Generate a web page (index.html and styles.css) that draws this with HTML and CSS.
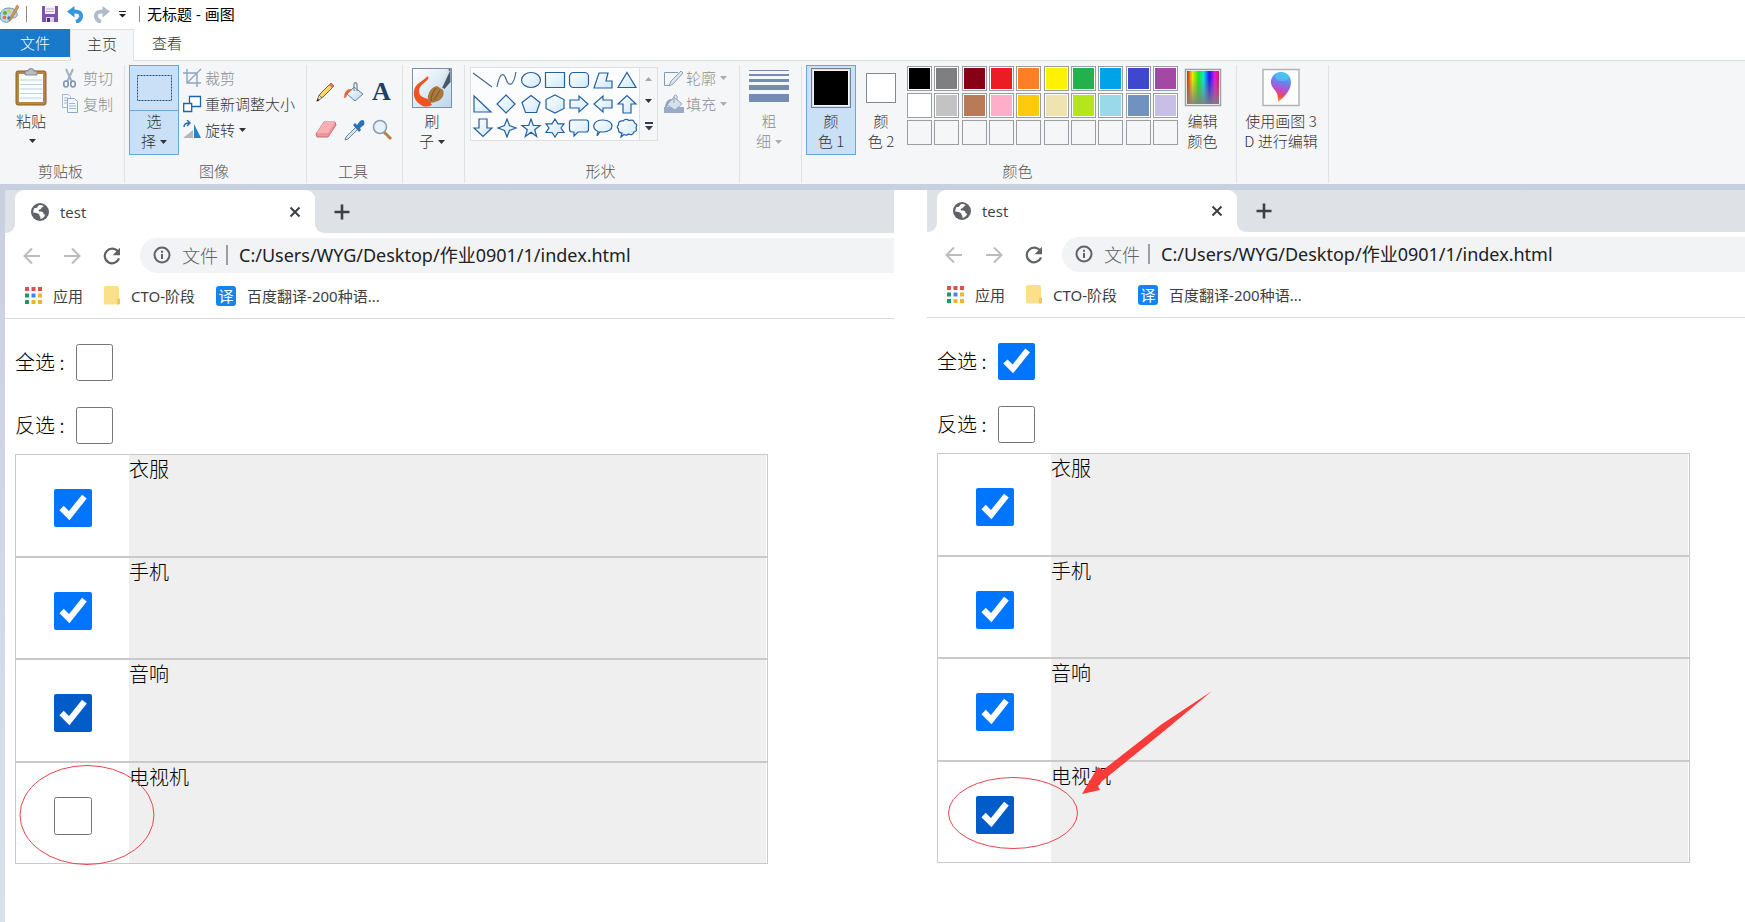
FILE: index.html
```html
<!DOCTYPE html>
<html lang="zh-CN">
<head>
<meta charset="utf-8">
<title>无标题 - 画图</title>
<link rel="stylesheet" href="styles.css">
</head>
<body>
<svg class="defs" aria-hidden="true">
  <defs>
    <linearGradient id="sky" x1="0" y1="0" x2="1" y2="1"><stop offset="0" stop-color="#fff"/><stop offset="1" stop-color="#cfe8f8"/></linearGradient>
    <linearGradient id="rainbow"><stop offset="0" stop-color="#e8140c"/><stop offset=".17" stop-color="#f2e60a"/><stop offset=".36" stop-color="#18e818"/><stop offset=".52" stop-color="#12e0e0"/><stop offset=".7" stop-color="#1818f0"/><stop offset=".87" stop-color="#e818e0"/><stop offset="1" stop-color="#e81450"/></linearGradient>
    <linearGradient id="grayfade" x1="0" y1="0" x2="0" y2="1"><stop offset=".2" stop-color="#808080" stop-opacity="0"/><stop offset="1" stop-color="#808080" stop-opacity=".9"/></linearGradient>
    <linearGradient id="drop" x1=".6" y1="0" x2=".4" y2="1"><stop offset="0" stop-color="#35c3f0"/><stop offset=".35" stop-color="#6f7df0"/><stop offset=".6" stop-color="#c04cc8"/><stop offset=".8" stop-color="#ee4a4a"/><stop offset="1" stop-color="#f7a52a"/></linearGradient>
    <linearGradient id="paint" x1="0" y1="0" x2="1" y2="1"><stop offset="0" stop-color="#fff"/><stop offset="1" stop-color="#bcd6ea"/></linearGradient>
  </defs>
  <symbol id="globe" viewBox="0 0 18 18"><circle cx="9" cy="9" r="9" fill="#5f6368"/><path fill="#fff" d="M8 2.200c1.800-.3 3.300 0 4.600.9-.2 1.200-1.900 1-2.200 2-.2.900-.6 1.400-1.600 1.400-.9 0-1.300.600-1.100 1.300.3.800 1.200.7 2.300.8 1.500.100 2.300.8 2.400 1.800 0 1 1.200.5 1.600 1.500-.4 2-2.300 3.600-4.700 4 .2-1 .4-1.700-.3-2.400-.9-.8-.3-1.800-1.200-2.400C6.500 10.300 4.500 9.700 2.100 9.500 2.200 8 2.700 6.300 3.600 5c1.200-.2 1.800.2 2.500-.4C6.900 3.900 6.800 2.600 8 2.200z"/></symbol>
  <symbol id="close" viewBox="0 0 12 12"><path d="M1.500 1.500l9 9M10.500 1.500l-9 9" stroke="#3c4043" stroke-width="2" fill="none"/></symbol>
  <symbol id="plus" viewBox="0 0 16 16"><path d="M8 .5v15M.5 8h15" stroke="#3c4043" stroke-width="2.600" fill="none"/></symbol>
  <symbol id="back" viewBox="0 0 18 18"><path d="M17 9H2M9 1.500L1.500 9 9 16.500" stroke="#babcbe" stroke-width="2" fill="none"/></symbol>
  <symbol id="forward" viewBox="0 0 18 18"><path d="M1 9h15M9 1.500L16.500 9 9 16.500" stroke="#babcbe" stroke-width="2" fill="none"/></symbol>
  <symbol id="reload" viewBox="0 0 18 18"><path d="M15.200 5A7.300 7.300 0 1 0 16 11.300" stroke="#5f6368" stroke-width="2.200" fill="none"/><path d="M17 .8v7.400H9.600z" fill="#5f6368"/></symbol>
  <symbol id="info" viewBox="0 0 18 18"><circle cx="9" cy="9" r="7.500" fill="none" stroke="#5f6368" stroke-width="2"/><path d="M9 8v5M9 4.700v2" stroke="#5f6368" stroke-width="2"/></symbol>
  <symbol id="apps" viewBox="0 0 17 17"><path fill="#de5246" d="M0 0h4v4H0zM6.500 0h4v4h-4zM13 0h4v4h-4z"/><path fill="#1a9e60" d="M0 6.500h4v4H0zM0 13h4v4H0z"/><path fill="#4285f4" d="M6.500 6.500h4v4h-4z"/><path fill="#f0b32b" d="M13 6.500h4v4h-4zM6.500 13h4v4h-4zM13 13h4v4h-4z"/></symbol>
  <symbol id="folder" viewBox="0 0 16 19"><path fill="#fbe089" d="M1.500 0H13q2 0 2 2v10l1 1v4q0 1.500-2 1.500H1.500Q0 18.500 0 17V1.500Q0 0 1.500 0z"/><path fill="#eec95a" d="M13 12.500l3 .5v4q0 1.500-3 1.500z"/></symbol>
  <symbol id="caret" viewBox="0 0 7 4"><path fill="currentColor" d="M0 0h7L3.500 4z"/></symbol>
</svg>

<header class="titlebar">
  <svg class="ico20" viewBox="0 0 20 20"><path d="M9 4C3 4 0 8 0 12c0 5 4 7 8 6 3-1 1-3 4-4 4 0 6-2 5-5-1-3-4-5-8-5z" fill="#b7d9ea" stroke="#6f97ae"/><circle cx="5" cy="9" r="2" fill="#5aae4a"/><circle cx="9" cy="7" r="1.800" fill="#e9c13b"/><circle cx="4.500" cy="13.500" r="1.800" fill="#e2703a"/><circle cx="9" cy="14" r="1.700" fill="#4277c5"/><path d="M17 1l2 2-8 13-2 1 .5-2.500z" fill="#d59a5b" stroke="#9b6b38" stroke-width=".6"/></svg>
  <span class="tsep"></span>
  <button class="qa" aria-label="保存"><svg width="16" height="16" viewBox="0 0 16 16"><path d="M0 0h16v16H0z" fill="#7d55a5"/><path d="M3 0h10v8H3z" fill="#f6f2fb"/><path d="M4 3h8M4 5.500h8" stroke="#b9a5d2"/><path d="M4 11h8v5H4z" fill="#d8cbe6"/><path d="M5 12h3v4H5z" fill="#54357a"/></svg></button>
  <button class="qa" aria-label="撤消"><svg width="17" height="17" viewBox="0 0 17 17"><path d="M3 5.500h5q6.500 0 6 5-.5 4-5 5.500" fill="none" stroke="#3a96dc" stroke-width="4"/><path d="M0 5.500L7.500 0v11.500z" fill="#3a96dc"/></svg></button>
  <button class="qa" aria-label="重做"><svg width="17" height="17" viewBox="0 0 17 17"><path d="M14 5.500H9q-6.500 0-6 5 .5 4 5 5.500" fill="none" stroke="#b0bccb" stroke-width="4"/><path d="M17 5.500L9.500 0v11.500z" fill="#b0bccb"/></svg></button>
  <button class="qa more" aria-label="自定义快速访问工具栏"><svg width="7" height="7" viewBox="0 0 7 7"><path d="M0 .5h7" stroke="#222"/><path d="M0 3h7L3.500 6.500z" fill="#222"/></svg></button>
  <span class="tsep"></span>
  <h1 class="apptitle">无标题 - 画图</h1>
</header>

<nav class="tabs">
  <button class="rtab file">文件</button>
  <button class="rtab active">主页</button>
  <button class="rtab">查看</button>
</nav>

<section class="ribbon">
  <div class="group g-clip">
    <div class="body">
      <button class="big paste">
        <svg width="32" height="38" viewBox="0 0 32 38"><rect x="1" y="3" width="30" height="34" rx="2" fill="#b8873f" stroke="#8a6124"/><path d="M4 6h24v28H4z" fill="#fcfdff"/><path d="M5 12h22M5 16.500h22M5 21h22M5 25.500h22M5 30h22" stroke="#b9cfe8"/><path d="M10 3h3q0-2.500 3-2.500T19 3h3v4H10z" fill="#b9bcc2" stroke="#74787f" stroke-width=".8"/></svg>
        <span>粘贴</span><svg class="caret low"><use href="#caret"/></svg>
      </button>
      <div class="stack">
        <button class="small off"><svg width="20" height="20" viewBox="0 0 20 20"><path d="M5 1l6 13M12 1L6 14" stroke="#9fb0c8" stroke-width="2" fill="none"/><ellipse cx="5" cy="16" rx="2.300" ry="3" fill="none" stroke="#7d94b5" stroke-width="1.600"/><ellipse cx="12" cy="16" rx="2.300" ry="3" fill="none" stroke="#7d94b5" stroke-width="1.600"/></svg>剪切</button>
        <button class="small off"><svg width="20" height="20" viewBox="0 0 20 20"><path d="M1.500.500h6l2 2v11h-8z" fill="#f3f7fc" stroke="#a4b8d2"/><path d="M3 4h4M3 6.500h4M3 9h4" stroke="#a4b8d2"/><path d="M6.500 4.500h7l3 3v11h-10z" fill="#f3f7fc" stroke="#8ea8c8"/><path d="M8 9.500h6M8 12h7M8 14.500h7" stroke="#a4b8d2"/></svg>复制</button>
      </div>
    </div>
    <h2>剪贴板</h2>
  </div>

  <div class="group g-image">
    <div class="body">
      <button class="select">
        <span class="selicon"><svg width="35" height="26" viewBox="0 0 35 26"><rect x=".5" y=".5" width="34" height="25" fill="none" stroke="#254f85" stroke-dasharray="2 1"/></svg></span>
        <span class="seltext">选<br>择<svg class="caret"><use href="#caret"/></svg></span>
      </button>
      <div class="stack">
        <button class="small off"><svg width="20" height="20" viewBox="0 0 20 20"><path d="M4 1v14h14M0 5h14v14M4 15L18 1" fill="none" stroke="#90a3bf" stroke-width="1.400"/></svg>裁剪</button>
        <button class="small"><svg width="20" height="20" viewBox="0 0 20 20"><path d="M6.500 2.500h11v10h-11z" fill="#fff" stroke="#1c64a8" stroke-width="1.300"/><path d="M.7 9.500h8v8h-8z" fill="#fff" stroke="#1c64a8" stroke-width="1.300"/></svg>重新调整大小</button>
        <button class="small"><svg width="20" height="20" viewBox="0 0 20 20"><path d="M11 4l7 14h-7z" fill="#2d80bd"/><path d="M0 18h10V10z" fill="#b3b7bb"/><path d="M1 7q0-4 5-4M4 0l3 3-3 3" fill="none" stroke="#2767ae" stroke-width="1.400"/></svg>旋转<svg class="caret"><use href="#caret"/></svg></button>
      </div>
    </div>
    <h2>图像</h2>
  </div>

  <div class="group g-tools">
    <div class="body toolgrid">
      <button aria-label="铅笔"><svg width="22" height="22" viewBox="0 0 22 22"><path d="M3 18l2-5L16 2l3 3L8 16z" fill="#f4d96a" stroke="#80602a"/><path d="M16 2l3 3-2 2-3-3z" fill="#d77a6b"/><path d="M2 20l2-6 3 3z" fill="#f2dfc0" stroke="#5e4a30" stroke-width=".7"/><path d="M1.500 20.500l1-3 2 2z" fill="#222"/></svg></button>
      <button aria-label="填充"><svg width="22" height="22" viewBox="0 0 22 22"><path d="M11 6l9 7-8 7-8-7z" fill="url(#paint)" stroke="#60819e"/><path d="M11 10V3q1-2.500 3 0v7" fill="none" stroke="#7d8b98" stroke-width="1.300"/><path d="M8 8Q1 8 1 17q3 0 3-4l5-4z" fill="#e8663a"/></svg></button>
      <button aria-label="文本"><b class="texta">A</b></button>
      <button aria-label="橡皮擦"><svg width="22" height="22" viewBox="0 0 22 22"><path d="M9 3h11l1 3-8 12H2l-1-3z" fill="#f0959a" stroke="#cd6a70"/><path d="M9 3h11l-7 11H1.500z" fill="#f7b0b3"/></svg></button>
      <button aria-label="颜色选取器"><svg width="22" height="22" viewBox="0 0 22 22"><path d="M13 8L3 18l-1 3 3-1L15 10z" fill="#d5e6f3" stroke="#66839e"/><path d="M10 6l2-2 2 2 3-4q3-2 4 0t0 4l-4 3 1 2-2 2z" fill="#2a72b6"/></svg></button>
      <button aria-label="放大镜"><svg width="22" height="22" viewBox="0 0 22 22"><path d="M13 13l7 7" stroke="#b18149" stroke-width="3"/><circle cx="9" cy="8" r="6.500" fill="#e4f2fc" stroke="#8b9bac" stroke-width="1.500"/></svg></button>
    </div>
    <h2>工具</h2>
  </div>

  <div class="group g-brush">
    <div class="body">
      <button class="big">
        <svg width="40" height="40" viewBox="0 0 40 40"><path d="M.5.500h39v39H.5z" fill="url(#paint)" stroke="#7990a6"/><path d="M15 8.500c1.500-.3 2 1 1 2.500-2 3-8 6-9 11-1 6 5 8 9 9l4 6c-4 2-8 2-11 0C4 34 1 29 2 23c1-8 10-10 13-14.500z" fill="#ee5420"/><path d="M38.500 1v13l-6 7-5-3L37 1z" fill="#46566f"/><path d="M36 2l2 1-8 17-4-2z" fill="#dbe3ea"/><path d="M25 18l6 4c2 5-1 9-5 11-3 1-6 2-9 2 1-3-2-3-1-7 1-5 4-9 9-10z" fill="#a9783f"/><path d="M24 20c-3 4-5 8-5 13M28 22c-2 4-4 7-6 10" stroke="#7c5425" fill="none"/><path d="M.5.500h39v39H.5z" fill="none" stroke="#7990a6"/></svg>
        <span>刷<br>子<svg class="caret"><use href="#caret"/></svg></span>
      </button>
    </div>
  </div>

  <div class="group g-shapes">
    <div class="body">
      <div class="gallery">
        <div class="shapes">
          <button aria-label="直线"><svg viewBox="0 0 22 20"><path d="M1 3l19 14"/></svg></button>
          <button aria-label="曲线"><svg viewBox="0 0 22 20"><path d="M1 17C4 1 8 3 10 9s7 10 10-7"/></svg></button>
          <button aria-label="椭圆"><svg viewBox="0 0 22 20"><ellipse cx="11" cy="10" rx="9.500" ry="7.500"/></svg></button>
          <button aria-label="矩形"><svg viewBox="0 0 22 20"><path d="M1.500 2.500h19v15h-19z"/></svg></button>
          <button aria-label="圆角矩形"><svg viewBox="0 0 22 20"><rect x="1.500" y="2.500" width="19" height="15" rx="4"/></svg></button>
          <button aria-label="多边形"><svg viewBox="0 0 22 20"><path d="M7 3h9l-2 8h6v7H2z"/></svg></button>
          <button aria-label="三角形"><svg viewBox="0 0 22 20"><path d="M11 2.500l9 15H2z"/></svg></button>
          <button aria-label="直角三角形"><svg viewBox="0 0 22 20"><path d="M2 2v16h17z"/></svg></button>
          <button aria-label="菱形"><svg viewBox="0 0 22 20"><path d="M10 1l9 9-9 9-9-9z"/></svg></button>
          <button aria-label="五边形"><svg viewBox="0 0 22 20"><path d="M11 1.500l9 7-3.500 10h-11L2 8.500z"/></svg></button>
          <button aria-label="六边形"><svg viewBox="0 0 22 20"><path d="M11 1l9 4.500v9L11 19l-9-4.500v-9z"/></svg></button>
          <button aria-label="右箭头"><svg viewBox="0 0 22 20"><path d="M2 6h9V2l9 8-9 8v-4H2z"/></svg></button>
          <button aria-label="左箭头"><svg viewBox="0 0 22 20"><path d="M20 6h-9V2l-9 8 9 8v-4h9z"/></svg></button>
          <button aria-label="上箭头"><svg viewBox="0 0 22 20"><path d="M7 19v-9H2l9-8.500 9 8.500h-5v9z"/></svg></button>
          <button aria-label="下箭头"><svg viewBox="0 0 22 20"><path d="M7 1v9H2l9 8.500 9-8.500h-5V1z"/></svg></button>
          <button aria-label="四角星"><svg viewBox="0 0 22 20"><path d="M11 1l2.500 6.500L20 10l-6.500 2.500L11 19l-2.500-6.500L2 10l6.500-2.500z"/></svg></button>
          <button aria-label="五角星"><svg viewBox="0 0 22 20"><path d="M11 1l2.300 6.500H20l-5.300 4.200 2 6.800-5.700-4.200-5.700 4.200 2-6.800L2 7.500h6.700z"/></svg></button>
          <button aria-label="六角星"><svg viewBox="0 0 22 20"><path d="M11 1l3 4.800h6L17 10l3 4.500h-6L11 19l-3-4.500H2L5 10 2 5.800h6z"/></svg></button>
          <button aria-label="圆角矩形标注"><svg viewBox="0 0 22 20"><path d="M4 2h14q2.500 0 2.500 2.500v7q0 2.500-2.500 2.500h-8l-4 4v-4H4q-2.500 0-2.500-2.500v-7Q1.500 2 4 2z"/></svg></button>
          <button aria-label="椭圆形标注"><svg viewBox="0 0 22 20"><path d="M5 18l1-4.500C-1 10 1 2 11 2c12 0 12 12 0 12q-2 0-3-.3z"/></svg></button>
          <button aria-label="云形标注"><svg viewBox="0 0 22 20"><path d="M5 19l1-4q-4 0-3.500-4-2.500-2 0-4Q2 2.500 7 3q3-3 6-.5 5-1.500 5.500 2.500 3.500 1.500 1.500 4.500 1.500 4-2 4.500-1.500 4-5.500 2-2 2-4.500.5z"/></svg></button>
        </div>
        <div class="scroll">
          <button aria-label="向上"><svg width="7" height="4" viewBox="0 0 7 4"><path d="M0 4h7L3.500 0z" fill="#a5a8ac"/></svg></button>
          <button aria-label="向下"><svg class="caret"><use href="#caret"/></svg></button>
          <button aria-label="更多"><svg width="8" height="9" viewBox="0 0 8 9"><path d="M0 1h8" stroke="#333c52" stroke-width="2"/><path d="M0 4h8L4 8.500z" fill="#333c52"/></svg></button>
        </div>
      </div>
      <div class="stack">
        <button class="small off"><svg width="20" height="20" viewBox="0 0 20 20"><path d="M14 4.500H.5v13H5L14 8" fill="none" stroke="#8599b0"/><path d="M5 18l2-5L17 3l2 2L9 16z" fill="#d9e4ee" stroke="#8ba2bb"/></svg>轮廓<svg class="caret"><use href="#caret"/></svg></button>
        <button class="small off"><svg width="20" height="20" viewBox="0 0 20 20"><path d="M0 13h20v6H0z" fill="#9baac7"/><path d="M10 3l8 7-7 6-8-5z" fill="#d5e0ec" stroke="#94a9c2"/><path d="M10 9V2q1-2 3 0v4" fill="none" stroke="#94a3b5"/><path d="M9 5Q2 4 1 13h2l2-5z" fill="#8da2c1"/></svg>填充<svg class="caret"><use href="#caret"/></svg></button>
      </div>
    </div>
    <h2>形状</h2>
  </div>

  <div class="group g-size">
    <div class="body">
      <button class="big off">
        <svg width="40" height="40" viewBox="0 0 40 40"><path fill="#768cb0" d="M0 2h40v1H0zM0 6h40v2H0zM0 11h40v3H0zM0 17h40v5H0zM0 26h40v8H0z"/></svg>
        <span>粗<br>细<svg class="caret"><use href="#caret"/></svg></span>
      </button>
    </div>
  </div>

  <div class="group g-colors">
    <div class="body">
      <button class="big col sel"><span class="well"><i class="sw black"></i></span><span>颜<br>色 1</span></button>
      <button class="big col"><span class="well plain"><i class="sw white"></i></span><span>颜<br>色 2</span></button>
      <div class="palette">
        <button class="c black" aria-label="黑色"></button><button class="c gray" aria-label="灰色"></button><button class="c darkred" aria-label="深红色"></button><button class="c red" aria-label="红色"></button><button class="c orange" aria-label="橙色"></button><button class="c yellow" aria-label="黄色"></button><button class="c green" aria-label="绿色"></button><button class="c turquoise" aria-label="青绿色"></button><button class="c indigo" aria-label="靛蓝色"></button><button class="c purple" aria-label="紫色"></button>
        <button class="c white" aria-label="白色"></button><button class="c lightgray" aria-label="浅灰色"></button><button class="c brown" aria-label="褐色"></button><button class="c rose" aria-label="玫瑰色"></button><button class="c gold" aria-label="金色"></button><button class="c tan" aria-label="浅黄色"></button><button class="c lime" aria-label="酸橙色"></button><button class="c pale" aria-label="淡青绿色"></button><button class="c bluegray" aria-label="蓝灰色"></button><button class="c lavender" aria-label="淡紫色"></button>
        <button class="c e" aria-label="自定义 1"></button><button class="c e" aria-label="自定义 2"></button><button class="c e" aria-label="自定义 3"></button><button class="c e" aria-label="自定义 4"></button><button class="c e" aria-label="自定义 5"></button><button class="c e" aria-label="自定义 6"></button><button class="c e" aria-label="自定义 7"></button><button class="c e" aria-label="自定义 8"></button><button class="c e" aria-label="自定义 9"></button><button class="c e" aria-label="自定义 10"></button>
      </div>
      <button class="big edit">
        <svg width="38" height="40" viewBox="0 0 38 40"><path d="M1.500 1.500h35v36h-35z" fill="#fff" stroke="#a0a0a0" stroke-width="1.500"/><path d="M3 3h32v33H3z" fill="url(#rainbow)"/><path d="M3 3h32v33H3z" fill="url(#grayfade)"/></svg>
        <span>编辑<br>颜色</span>
      </button>
    </div>
    <h2>颜色</h2>
  </div>

  <div class="group g-3d">
    <div class="body">
      <button class="big">
        <svg width="38" height="40" viewBox="0 0 38 40"><path d="M1 1.500h36v36H1z" fill="#fdfdfd" stroke="#b4b4b4" stroke-width="1.500"/><path d="M19 4c-6 0-10.500 5-10 11 .5 5 6 8 6.500 12 .3 3 .2 4 .5 7 5-4 13-11 13-19.500C29 8.500 25 4 19 4z" fill="url(#drop)"/><ellipse cx="20" cy="9" rx="7" ry="4" fill="#4cd0f0" opacity=".6"/></svg>
        <span>使用画图 3<br>D 进行编辑</span>
      </button>
    </div>
  </div>
</section>

<main class="workspace">
  <div class="canvas">
    <section class="browser first">
      <div class="strip">
        <div class="edge"></div>
        <div class="tab"><svg class="globe"><use href="#globe"/></svg><span class="tname">test</span><button class="x" aria-label="关闭标签页"><svg width="12" height="12"><use href="#close"/></svg></button></div>
        <div class="rest"><button aria-label="新标签页"><svg width="16" height="16"><use href="#plus"/></svg></button></div>
      </div>
      <div class="toolbar">
        <button aria-label="后退"><svg width="18" height="18"><use href="#back"/></svg></button>
        <button aria-label="前进"><svg width="18" height="18"><use href="#forward"/></svg></button>
        <button aria-label="重新加载"><svg width="18" height="18"><use href="#reload"/></svg></button>
        <div class="omni"><svg width="18" height="18"><use href="#info"/></svg><label for="url1">文件</label><input id="url1" type="text" value="C:/Users/WYG/Desktop/作业0901/1/index.html"></div>
      </div>
      <div class="bookmarks">
        <a href="#"><svg width="17" height="17"><use href="#apps"/></svg>应用</a>
        <a href="#"><svg width="16" height="19"><use href="#folder"/></svg>CTO-阶段</a>
        <a href="#"><span class="yi">译</span>百度翻译-200种语...</a>
      </div>
      <div class="page">
        <p class="opt"><label for="all1">全选 :</label><input id="all1" type="checkbox"></p>
        <p class="opt"><label for="inv1">反选 :</label><input id="inv1" type="checkbox"></p>
        <ul class="list">
          <li><span class="cell"><input id="a1" type="checkbox" checked></span><label for="a1">衣服</label></li>
          <li><span class="cell"><input id="a2" type="checkbox" checked></span><label for="a2">手机</label></li>
          <li><span class="cell"><input id="a3" class="hot" type="checkbox" checked></span><label for="a3">音响</label></li>
          <li><span class="cell"><input id="a4" type="checkbox"></span><label for="a4">电视机</label>
            <svg class="mark markleft" width="136" height="102" viewBox="0 0 136 102"><ellipse cx="68" cy="51" rx="67" ry="49.500" fill="none" stroke="#e6454e"/></svg></li>
        </ul>
      </div>
    </section>

    <section class="browser second">
      <div class="strip">
        <div class="edge"></div>
        <div class="tab"><svg class="globe"><use href="#globe"/></svg><span class="tname">test</span><button class="x" aria-label="关闭标签页"><svg width="12" height="12"><use href="#close"/></svg></button></div>
        <div class="rest"><button aria-label="新标签页"><svg width="16" height="16"><use href="#plus"/></svg></button></div>
      </div>
      <div class="toolbar">
        <button aria-label="后退"><svg width="18" height="18"><use href="#back"/></svg></button>
        <button aria-label="前进"><svg width="18" height="18"><use href="#forward"/></svg></button>
        <button aria-label="重新加载"><svg width="18" height="18"><use href="#reload"/></svg></button>
        <div class="omni"><svg width="18" height="18"><use href="#info"/></svg><label for="url2">文件</label><input id="url2" type="text" value="C:/Users/WYG/Desktop/作业0901/1/index.html"></div>
      </div>
      <div class="bookmarks">
        <a href="#"><svg width="17" height="17"><use href="#apps"/></svg>应用</a>
        <a href="#"><svg width="16" height="19"><use href="#folder"/></svg>CTO-阶段</a>
        <a href="#"><span class="yi">译</span>百度翻译-200种语...</a>
      </div>
      <div class="page">
        <p class="opt"><label for="all2">全选 :</label><input id="all2" type="checkbox" checked></p>
        <p class="opt"><label for="inv2">反选 :</label><input id="inv2" type="checkbox"></p>
        <ul class="list">
          <li><span class="cell"><input id="b1" type="checkbox" checked></span><label for="b1">衣服</label></li>
          <li><span class="cell"><input id="b2" type="checkbox" checked></span><label for="b2">手机</label></li>
          <li><span class="cell"><input id="b3" type="checkbox" checked></span><label for="b3">音响</label></li>
          <li><span class="cell"><input id="b4" class="hot" type="checkbox" checked></span><label for="b4">电视机</label>
            <svg class="mark markright" width="276" height="164" viewBox="0 0 276 164"><ellipse cx="76" cy="122" rx="64.500" ry="35.500" fill="none" stroke="#e6454e"/><path d="M275 0L225 33l-59 46-5-3-16 27 18-4-2-4 3-4L232 36z" fill="#fb3a3a"/></svg></li>
        </ul>
      </div>
    </section>
  </div>
</main>
</body>
</html>
```

FILE: styles.css
```css
* { box-sizing: border-box; }
body {
  margin: 0;
  min-height: 100vh;
  display: flex;
  flex-direction: column;
  background: #fff;
  color: #333;
  font: 300 15px/20px "Noto Sans CJK SC", sans-serif;
  overflow: hidden;
}
button {
  padding: 0;
  border: 0;
  background: none;
  color: inherit;
  font: inherit;
}
svg { display: block; flex: none; }
h1, h2, p, ul { margin: 0; padding: 0; font-weight: inherit; }
.defs { position: absolute; width: 0; height: 0; }

/* title bar and ribbon tabs */
.titlebar { display: flex; align-items: center; height: 29px; padding-bottom: 1px; color: #000; }
.ico20 { width: 20px; height: 20px; }
.tsep { width: 1px; height: 16px; margin: 0 7px 0 6px; background: #8c8c8c; }
.qa { display: flex; justify-content: center; width: 17px; margin-right: 9px; }
.titlebar .qa:first-of-type { margin-left: 7px; }
.titlebar .qa.more { width: 7px; margin-right: 7px; }
.apptitle { font: 400 15px/20px "Noto Sans", "Noto Sans CJK SC", sans-serif; }
.tabs { display: flex; height: 31px; }
.rtab { width: 66px; height: 28px; }
.rtab.file { width: 70px; background: #1979ca; color: #fff; }
.rtab.active {
  width: 64px;
  height: 32px;
  padding-bottom: 4px;
  border: 1px solid #dfe1e3;
  border-bottom: 0;
  background: #f5f6f7;
  z-index: 1;
}

/* ribbon */
.ribbon {
  display: flex;
  flex: none;
  height: 124px;
  padding-top: 4px;
  border-top: 1px solid #dadcde;
  background: #f5f6f7;
}
.group {
  display: flex;
  flex-direction: column;
  flex: none;
  height: 118px;
  border-right: 1px solid #dfe2e5;
}
.group h2 { padding-right: 3px; font-size: 15px; text-align: center; color: #555; }
.body { display: flex; height: 96px; }
.g-clip { width: 125px; }
.g-image { width: 182px; }
.g-tools { width: 96px; }
.g-brush { width: 62px; }
.g-shapes { width: 275px; }
.g-size { width: 62px; }
.g-colors { width: 435px; }
.g-3d { width: 92px; }
.big {
  display: flex;
  flex-direction: column;
  align-items: center;
  width: 50px;
  height: 90px;
  padding-top: 3px;
}
.big > svg { margin-bottom: 3px; }
.off { color: #8b8f94; }
.caret { display: inline-block; width: 7px; height: 4px; margin: 0 0 3px 4px; }
.off .caret { color: #a9acb0; }
.caret.low { margin: 8px 0 0 2px; }
.paste { width: 62px; padding-top: 3px; }
.paste > svg:first-child { margin-bottom: 5px; }
.stack { display: flex; flex-direction: column; gap: 6px; padding-top: 3px; }
.small { display: flex; align-items: center; height: 20px; white-space: nowrap; }
.small > svg:first-child { margin-right: 2px; }
.small .caret { margin: 0 0 0 4px; }
.g-clip .stack { margin-left: -1px; }
.g-image .body { padding-left: 4px; gap: 4px; }
.select { width: 50px; height: 90px; border: 1px solid #6ba5dc; background: #c9e0f7; }
.selicon { display: flex; align-items: center; justify-content: center; height: 45px; border-bottom: 1px solid #6ba5dc; }
.seltext { display: block; height: 43px; }
.toolgrid {
  display: grid;
  grid-template-columns: repeat(3, 28px);
  grid-template-rows: 38px 38px;
  justify-content: center;
  padding: 8px 2px 0 0;
}
.toolgrid button { display: flex; align-items: center; justify-content: center; }
.texta { color: #1e3f66; font: 700 26px/26px "Liberation Serif", serif; }
.g-brush .big, .g-size .big, .g-3d .big { width: 100%; padding-right: 3px; }
.g-shapes .body { padding-left: 5px; gap: 6px; }
.gallery { display: flex; width: 188px; height: 74px; margin-top: 2px; border: 1px solid #dcdfe3; background: #fbfcfd; }
.shapes { display: grid; grid-template-columns: repeat(7, 24px); grid-template-rows: repeat(3, 24px); }
.shapes svg { width: 22px; height: 20px; margin: 0 auto; fill: url(#sky); stroke: #245f9f; stroke-width: 1.200; }
.shapes button:nth-child(-n+2) svg { fill: none; stroke: #49698c; }
.scroll { display: grid; flex: 1; border-left: 1px solid #dcdfe3; background: #f5f6f7; }
.scroll button { display: flex; align-items: center; justify-content: center; }
.scroll .caret { margin: 0; }

/* colours */
.g-colors .body { padding-left: 4px; }
.col.sel { border: 1px solid #6ba5dc; background: #c9e0f7; padding-top: 2px; }
.well { display: flex; align-items: center; justify-content: center; width: 40px; height: 40px; margin-bottom: 3px; border: 1px solid #77818d; background: #c9e0f7; }
.well.plain { border: 0; background: none; }
.sw { width: 36px; height: 36px; border: 1px solid #f5f6f7; }
.plain .sw { width: 30px; height: 30px; border: 1px solid #85888c; }
.palette {
  display: grid;
  grid-template-columns: repeat(10, 25px);
  grid-auto-rows: 25px;
  justify-content: space-between;
  row-gap: 2px;
  width: 271px;
  padding-top: 1px;
  margin-left: 1px;
}
.c { border: 1px solid #9a9ea3; box-shadow: inset 0 0 0 1px #fff; }
.c.e { box-shadow: none; }
.edit { width: 49px; }
.black { background: #000; }
.gray { background: #7f7f7f; }
.darkred { background: #880015; }
.red { background: #ed1c24; }
.orange { background: #ff7f27; }
.yellow { background: #fff200; }
.green { background: #22b14c; }
.turquoise { background: #00a2e8; }
.indigo { background: #3f48cc; }
.purple { background: #a349a4; }
.white { background: #fff; }
.lightgray { background: #c3c3c3; }
.brown { background: #b97a57; }
.rose { background: #ffaec9; }
.gold { background: #ffc90e; }
.tan { background: #efe4b0; }
.lime { background: #b5e61d; }
.pale { background: #99d9ea; }
.bluegray { background: #7092be; }
.lavender { background: #c8bfe7; }

/* drawing area */
.workspace {
  flex: 1;
  display: flex;
  padding: 6px 0 0 5px;
  background: linear-gradient(#c8cfdf, #d7e1ed);
}
.canvas { display: flex; flex: 1; min-width: 0; gap: 33px; background: #fff; }
.browser { min-width: 0; overflow: hidden; color: #000; }
.first { flex: 889 1 0; }
.second { flex: 818 1 0; }
.strip { display: flex; height: 43px; background: #fff; }
.second .strip { height: 42px; }
.edge { width: 10px; background: #dee1e5; border-bottom-right-radius: 9px; }
.tab {
  display: flex;
  align-items: center;
  width: 300px;
  padding: 0 14px 0 16px;
  border-radius: 9px 9px 0 0;
  background: #fff;
  box-shadow: 0 -9px 0 #dee1e5;
}
.globe { width: 18px; height: 18px; }
.tname { flex: 1; padding-left: 11px; font: 15px/20px "Open Sans", sans-serif; color: #3c4043; }
.rest { display: flex; align-items: center; flex: 1; padding-left: 19px; border-bottom-left-radius: 9px; background: #dee1e5; }
.toolbar { display: flex; align-items: center; padding: 5px 0 0 18px; }
.toolbar > button { width: 18px; margin-right: 22px; }
.toolbar > button:nth-of-type(3) { margin-right: 19px; }
.omni {
  display: flex;
  align-items: center;
  flex: 1;
  height: 35px;
  padding: 0 0 2px 13px;
  border-radius: 18px 0 0 18px;
  background: #f1f3f4;
}
.omni label { margin-left: 11px; padding-right: 8px; border-right: 2px solid #9a9da1; font-size: 18px; color: #5f6368; }
.omni input {
  flex: 1;
  min-width: 0;
  padding: 0 0 0 11px;
  border: 0;
  background: none;
  color: #202124;
  font: 400 18px/26px "Noto Sans", "Noto Sans CJK SC", sans-serif;
}
.bookmarks { display: flex; align-items: center; gap: 21px; height: 46px; padding-left: 20px; border-bottom: 1px solid #d9dbde; }
.bookmarks a { display: flex; align-items: center; gap: 11px; color: #3c4043; text-decoration: none; font: 400 15px/20px "Noto Sans", "Noto Sans CJK SC", sans-serif; }
.yi { width: 20px; height: 20px; border-radius: 3px; background: #1684f0; color: #fff; text-align: center; }

/* page shown inside each browser */
.page { padding: 24px 10px 0; font-size: 20px; line-height: 28px; }
.opt { display: flex; align-items: center; height: 38px; margin-bottom: 25px; }
.opt + .opt { margin-bottom: 10px; }
.opt label { width: 61px; }
input[type="checkbox"] { width: 38px; height: 38px; margin: 0; accent-color: #0075ff; }
.opt input[type="checkbox"] { width: 37px; height: 37px; }
input.hot { accent-color: #005cc8; }
.list { display: grid; grid-template-rows: repeat(4, 1fr); width: 753px; max-width: 100%; height: 410px; list-style: none; }
.list li { position: relative; display: flex; border: 1px solid #c9c9c9; padding-right: 1px; }
.list label { flex: 1; background: #efefef; }
.cell { display: flex; width: 113px; padding: 34px 0 0 38px; }
.mark { position: absolute; pointer-events: none; }
.markleft { left: 3px; top: 1px; }
.markright { left: -1px; top: -71px; z-index: 1; }
```
